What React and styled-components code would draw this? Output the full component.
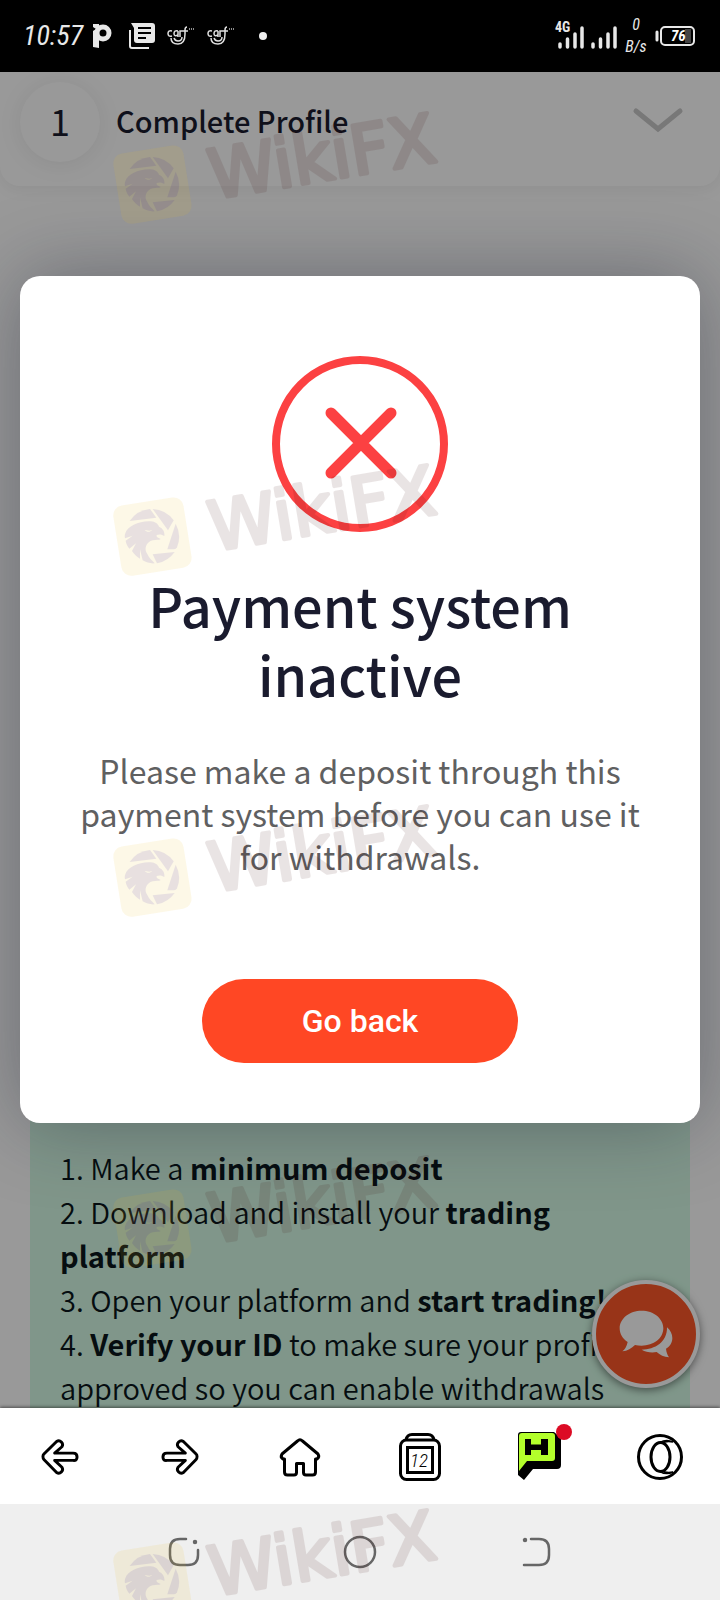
import React from "react";
import styled, { createGlobalStyle } from "styled-components";

const GlobalStyle = createGlobalStyle`
  *, *::before, *::after { box-sizing: border-box; }
  body {
    margin: 0;
    background: #fff;
    font-family: "Noto Sans CJK SC", "Noto Sans", sans-serif;
    color: #1a1b2e;
  }
  button { border: 0; padding: 0; background: none; font: inherit; cursor: pointer; }
  svg { display: block; flex: none; overflow: visible; }
`;

const Phone = styled.div`
  position: relative;
  display: flex;
  flex-direction: column;
  height: 100vh;
  overflow: hidden;
`;

/* Status bar */

const StatusBar = styled.header`
  flex: none;
  display: flex;
  justify-content: space-between;
  align-items: center;
  height: 72px;
  padding: 0 25px 0 23px;
  background: #000;
  color: #e8e8e8;
  font-family: "Roboto Condensed", "Open Sans", sans-serif;
  font-style: italic;
`;

const StatusGroup = styled.div`
  display: flex;
  align-items: center;
  gap: ${(p) => p.$gap}px;
`;

const Clock = styled.time`
  width: 58px;
  font-size: 28px;
  line-height: 32px;
  white-space: nowrap;
`;

const NetSpeed = styled.div`
  display: flex;
  flex-direction: column;
  gap: 6px;
  width: 24px;
  text-align: center;
  font-size: 16px;
  line-height: 16px;
`;

/* Page behind the dialog */

const Viewport = styled.main`
  position: relative;
  flex: 1;
  min-height: 0;
  overflow: hidden;
  background: #fff;
`;

const StepCard = styled.section`
  display: flex;
  align-items: center;
  gap: 16px;
  padding: 10px 37px 24px 20px;
  border-radius: 0 0 20px 20px;
  background: #fff;
  box-shadow: 0 4px 16px rgba(0, 0, 0, 0.06);
`;

const StepNumber = styled.span`
  display: grid;
  place-items: center;
  width: 80px;
  height: 80px;
  padding-bottom: 4px;
  border-radius: 50%;
  background: #fff;
  box-shadow: 0 2px 24px rgba(0, 0, 0, 0.08);
  font-size: 36px;
  line-height: 44px;
`;

const StepTitle = styled.h2`
  flex: 1;
  margin: 0;
  padding-bottom: 4px;
  font-size: 29px;
  line-height: 44px;
  font-weight: 500;
`;

const Guide = styled.section`
  margin: 900px 30px 0;
  padding: 59px 30px;
  background: #d5fbe6;
  color: #0a161b;
  font-size: 29px;
  line-height: 44px;
  font-weight: 350;

  strong { font-weight: 700; }
`;

const GuideStep = styled.p`
  margin: 0;
`;

const ChatButton = styled.button`
  position: absolute;
  right: 20px;
  bottom: 20px;
  display: grid;
  place-items: center;
  width: 108px;
  height: 108px;
  border: 4px solid #fff;
  border-radius: 50%;
  background: #fd5828;
  box-shadow: 0 2px 8px rgba(0, 0, 0, 0.5);
`;

/* Dialog */

const Backdrop = styled.div`
  position: absolute;
  inset: 0;
  padding: 204px 20px 0;
  background: rgba(0, 0, 0, 0.4);
`;

const Dialog = styled.section`
  display: flex;
  flex-direction: column;
  align-items: center;
  padding: 80px 40px 60px;
  border-radius: 20px;
  background: #fff;
  box-shadow: 0 0 80px rgba(20, 24, 44, 0.36);
  text-align: center;
`;

const DialogTitle = styled.h1`
  margin: 38px 0 0;
  font-size: 54px;
  line-height: 69px;
  font-weight: 500;
`;

const DialogText = styled.p`
  margin: 41px 0 0;
  color: #5f6061;
  font-size: 32px;
  line-height: 43px;
`;

const PrimaryButton = styled.button`
  width: 316px;
  height: 84px;
  margin-top: 101px;
  border-radius: 42px;
  background: #ff4724;
  color: #fff;
  font-family: Roboto, sans-serif;
  font-size: 32px;
  font-weight: 500;
`;

/* Bottom bars */

const BrowserBar = styled.nav`
  position: relative;
  flex: none;
  display: flex;
  height: 96px;
  padding-top: 2px;
  background: #fff;
  box-shadow: 0 -1px 3px rgba(0, 0, 0, 0.5);
`;

const SystemBar = styled.nav`
  position: relative;
  flex: none;
  display: flex;
  height: 96px;
  padding: 0 96px;
  background: #efefef;
`;

const BarButton = styled.button`
  flex: 1;
  display: grid;
  place-items: center;
`;

/* Watermarks lie over the whole screen */

const Overlay = styled.div`
  position: absolute;
  inset: 0;
  overflow: hidden;
  pointer-events: none;
`;

const Mark = styled.svg`
  position: absolute;
  left: 112px;
  top: ${(p) => p.$top}px;
`;

const MARKS = [107, 459, 800, 1151, 1504];

function Watermark({ top }) {
  return (
    <Mark $top={top} width="336" height="124" viewBox="0 0 336 124" aria-hidden="true">
      <rect x="5" y="42" width="71" height="71" rx="10" fill="#f0be28" opacity="0.11" transform="rotate(-9 41 78)" />
      <g opacity="0.09" fill="#2000a0" transform="translate(-4 31) scale(0.3333)">
        <path d="M65 93A83 83 0 0 1 126 57L145 83Z" />
        <path d="M134 57A83 83 0 0 1 197 91L180 121Z" />
        <path d="M203 101A83 83 0 0 1 207 172Q204 178 198 178L178 178Z" />
        <path d="M200 186A83 83 0 0 1 147 220L134 193Z" />
        <path d="M52 130C58 108 95 92 128 94C142 95 150 102 153 110C165 115 171 126 169 138C163 133 153 132 146 135C144 140 149 143 158 147C153 151 144 148 134 151C114 156 107 178 118 192C122 203 132 211 140 220C128 221 115 218 104 211L96 178L96 206C88 201 78 193 72 183L84 160L64 176C58 168 54 160 53 152L74 137L51 145C50 140 50 135 52 130ZM110 120C116 127 126 127 133 120L124 122Z" fillRule="evenodd" />
      </g>
      <g opacity="0.1">
        <text
          x="101"
          y="92"
          transform="rotate(-9.5 101 92)"
          fontFamily="DejaVu Sans, sans-serif"
          fontSize="68"
          fill="#370000"
          stroke="#370000"
          strokeWidth="4"
          strokeLinejoin="round"
        >
          WikiFX
        </text>
      </g>
    </Mark>
  );
}

/* Status bar drawings */

const PayIcon = () => (
  <svg width="18" height="26" viewBox="0 0 18 26">
    <path d="M0 1H6V25L0 24V8L3 6 0 4Z" fill="#e8e8e8" />
    <circle cx="10" cy="10" r="6" fill="none" stroke="#e8e8e8" strokeWidth="5" />
  </svg>
);

const NewsIcon = () => (
  <svg width="26" height="26" viewBox="0 0 26 26">
    <path d="M1 7V23Q1 25 3 25H20" fill="none" stroke="#e8e8e8" strokeWidth="2" />
    <path d="M2 0H23Q26 0 26 3V17Q26 20 23 20H8Q5 20 5 17V5Z" fill="#e8e8e8" />
    <path d="M9 5H22M9 10H22M9 15H17" stroke="#000" strokeWidth="2" />
  </svg>
);

const CartIcon = () => (
  <svg width="28" height="20" viewBox="0 0 28 20" fill="none" stroke="#e0e0e0" strokeWidth="1.500">
    <path d="M5 5Q1 4 1 7.500T5 10M11 5Q7 4 7 7.500T11 9V5V11M13 11V5Q14 5 16 5M20 1Q18 1 18 4V8Q18 18 11 18Q4 18 4 12M16 5H21M7 12Q8 15 11 15Q15 15 15 11" />
    <path d="M22 3H28" strokeWidth="2" strokeDasharray="1 1" stroke="#909090" />
  </svg>
);

const Signal = ({ label }) => (
  <svg width={label ? 28 : 26} height="28" viewBox={label ? "-2 0 28 28" : "0 0 26 28"}>
    {label && (
      <text x="-3" y="10" fontSize="14" fontWeight="700" fontStyle="normal" fontFamily="Roboto Condensed, Roboto, sans-serif" fill="#e8e8e8">
        {label}
      </text>
    )}
    <path d="M2 22V25M9.500 17V25M17 12V25M24 6V25" stroke="#e8e8e8" strokeWidth="3.500" strokeLinecap="round" />
  </svg>
);

const Battery = () => (
  <svg width="40" height="20" viewBox="0 0 40 20">
    <path d="M2 6V14" stroke="#e8e8e8" strokeWidth="3" strokeLinecap="round" />
    <rect x="30" y="3" width="6" height="14" fill="#444" />
    <rect x="6" y="1" width="33" height="18" rx="4" fill="none" stroke="#e8e8e8" strokeWidth="2" />
    <text x="16" y="15" fontSize="15" fontWeight="700" fontFamily="Roboto Condensed, Roboto, sans-serif" fill="#fff">
      76
    </text>
  </svg>
);

const Dot = () => (
  <svg width="14" height="8" viewBox="-6 0 14 8">
    <circle cx="4" cy="4" r="4" fill="#f0f0f0" />
  </svg>
);

/* Page drawings */

const Chevron = () => (
  <svg width="50" height="30" viewBox="0 0 50 30">
    <path d="M3 4L25 22L47 4" fill="none" stroke="#c8c8c8" strokeWidth="5" strokeLinecap="round" />
  </svg>
);

const ChatIcon = () => (
  <svg width="54" height="48" viewBox="658 628 160 144" fill="#fff">
    <path d="M725 630C761 630 790 653 790 683S761 735 725 735C718 735 711 734 705 733C695 743 682 751 667 752Q679 743 683 724C668 715 659 700 659 683C659 653 689 630 725 630Z" />
    <path d="M801 680C811 689 817 700 817 712C817 726 810 737 798 744C799 754 802 762 807 770C792 769 780 763 770 754C753 757 738 754 725 747C765 747 802 724 801 680Z" />
  </svg>
);

const ErrorIcon = () => (
  <svg width="176" height="176" viewBox="0 0 176 176" fill="none" stroke="#fc4142">
    <circle cx="88" cy="88" r="84" strokeWidth="8" />
    <path d="M59 57L119 117M119 57L59 117" strokeWidth="11" strokeLinecap="round" />
  </svg>
);

/* Browser bar drawings */

const ARROW =
  "M2 19Q2 17.500 3 16.500L16 3.500A4 4 0 0 1 21.500 9L14 15.500H33Q37 15.500 37 19.500T33 23H14L21.500 30A4 4 0 0 1 16 35.500L3 22Q2 21 2 19Z";

const ArrowIcon = ({ forward }) => (
  <svg width="38" height="38" viewBox="0 0 39 39">
    <path
      d={ARROW}
      transform={forward ? "translate(39 0) scale(-1 1)" : undefined}
      fill="none"
      stroke="#000"
      strokeWidth="3"
      strokeLinejoin="round"
    />
  </svg>
);

const HomeIcon = () => (
  <svg width="42" height="38" viewBox="0 0 42 38" fill="none" stroke="#000" strokeWidth="3" strokeLinejoin="round">
    <path d="M18.500 3Q21 0.500 23.500 3L39 16Q41 19 38 21H36.500V34Q36.500 37 33.500 37H27Q24.500 37 24.500 34.500V25.500H17.500V34.500Q17.500 37 15 37H8.500Q5.500 37 5.500 34V21H4Q1 19 3 16Z" />
  </svg>
);

const TabsIcon = () => (
  <svg width="44" height="50" viewBox="0 0 44 50" fill="none" stroke="#000">
    <path d="M8 8Q9 2.500 14 2.500H30Q35 2.500 36 8" strokeWidth="3" />
    <rect x="2.500" y="8" width="39" height="39.500" rx="6" strokeWidth="3" />
    <rect x="9.500" y="15.500" width="25" height="25" strokeWidth="3" />
    <text x="21" y="35" textAnchor="middle" fontSize="19" fontStyle="italic" fontWeight="300" fontFamily="Roboto Condensed, Roboto, sans-serif" fill="#000" stroke="none">
      12
    </text>
  </svg>
);

const HypeIcon = () => (
  <svg width="68" height="66" viewBox="-12 0 68 66">
    <path d="M0 11Q0 8 3 8H36L43 14V41Q43 45 39 45H15L6 56L0 51Z" fill="#000" />
    <path d="M1 12Q1 9 4 9H34Q37 9 37 12V34Q37 37 34 37H9L1 47Z" fill="#b3ff2b" />
    <path d="M7 15H13V20.500H23V15H30V31H23V26H13V31H7Z" fill="#000" />
    <circle cx="46" cy="8" r="8" fill="#dc0b24" />
  </svg>
);

const OperaIcon = () => (
  <svg width="46" height="46" viewBox="0 0 46 46" fill="none" stroke="#000">
    <circle cx="23" cy="23" r="21.500" strokeWidth="3" />
    <ellipse cx="23.500" cy="23" rx="9.500" ry="14.500" strokeWidth="3" />
    <path d="M23 8.500C27 6 32 6 36 8C31 7 27 8 25 9.500M23 37.500C27 40 32 40 36 38C31 39 27 38 25 36.500" strokeWidth="1.500" />
  </svg>
);

/* System bar drawings */

const RecentIcon = () => (
  <svg width="30" height="28" viewBox="0 0 30 28" fill="none" stroke="#666" strokeWidth="2.500" strokeLinecap="round">
    <path d="M17 1H11Q1 1 1 11V17Q1 27 11 27H19Q29 27 29 17V12" />
    <circle cx="26" cy="4" r="1" fill="#666" />
  </svg>
);

const CircleIcon = () => (
  <svg width="32" height="32" viewBox="0 0 32 32" fill="none" stroke="#666" strokeWidth="2.500">
    <circle cx="16" cy="16" r="15" />
  </svg>
);

const ReturnIcon = () => (
  <svg width="28" height="28" viewBox="0 0 28 28" fill="none" stroke="#666" strokeWidth="2.500" strokeLinecap="round">
    <path d="M9 1H17Q27 1 27 11V17Q27 27 17 27H2" />
    <circle cx="3" cy="2" r="1" fill="#666" />
  </svg>
);

export default function App() {
  return (
    <>
      <GlobalStyle />
      <Phone>
        <StatusBar>
          <StatusGroup $gap={18}>
            <StatusGroup $gap={12}>
              <Clock>10:57</Clock>
              <PayIcon />
            </StatusGroup>
            <StatusGroup $gap={12}>
              <NewsIcon />
              <CartIcon />
              <CartIcon />
            </StatusGroup>
            <Dot />
          </StatusGroup>
          <StatusGroup $gap={7}>
            <Signal label="4G" />
            <Signal />
            <NetSpeed>
              <span>0</span>
              <span>B/s</span>
            </NetSpeed>
            <Battery />
          </StatusGroup>
        </StatusBar>

        <Viewport>
          <StepCard>
            <StepNumber>1</StepNumber>
            <StepTitle>Complete Profile</StepTitle>
            <Chevron />
          </StepCard>
          <Guide>
            <GuideStep>1. Make a <strong>minimum deposit</strong></GuideStep>
            <GuideStep>2. Download and install your <strong>trading platform</strong></GuideStep>
            <GuideStep>3. Open your platform and <strong>start trading!</strong></GuideStep>
            <GuideStep>
              4. <strong>Verify your ID</strong> to make sure your profile is approved so you can enable withdrawals
            </GuideStep>
          </Guide>
          <ChatButton type="button" aria-label="Chat">
            <ChatIcon />
          </ChatButton>
          <Backdrop>
            <Dialog role="alertdialog" aria-labelledby="dialog-title" aria-describedby="dialog-text">
              <ErrorIcon />
              <DialogTitle id="dialog-title">Payment system inactive</DialogTitle>
              <DialogText id="dialog-text">
                Please make a deposit through this payment system before you can use it for withdrawals.
              </DialogText>
              <PrimaryButton type="button">Go back</PrimaryButton>
            </Dialog>
          </Backdrop>
        </Viewport>

        <BrowserBar aria-label="Browser">
          <BarButton type="button" aria-label="Back"><ArrowIcon /></BarButton>
          <BarButton type="button" aria-label="Forward"><ArrowIcon forward /></BarButton>
          <BarButton type="button" aria-label="Home"><HomeIcon /></BarButton>
          <BarButton type="button" aria-label="Tabs"><TabsIcon /></BarButton>
          <BarButton type="button" aria-label="Hype"><HypeIcon /></BarButton>
          <BarButton type="button" aria-label="Opera menu"><OperaIcon /></BarButton>
        </BrowserBar>
        <SystemBar aria-label="System">
          <BarButton type="button" aria-label="Recent apps"><RecentIcon /></BarButton>
          <BarButton type="button" aria-label="Home screen"><CircleIcon /></BarButton>
          <BarButton type="button" aria-label="Return"><ReturnIcon /></BarButton>
        </SystemBar>

        <Overlay>
          {MARKS.map((top) => (
            <Watermark key={top} top={top} />
          ))}
        </Overlay>
      </Phone>
    </>
  );
}
